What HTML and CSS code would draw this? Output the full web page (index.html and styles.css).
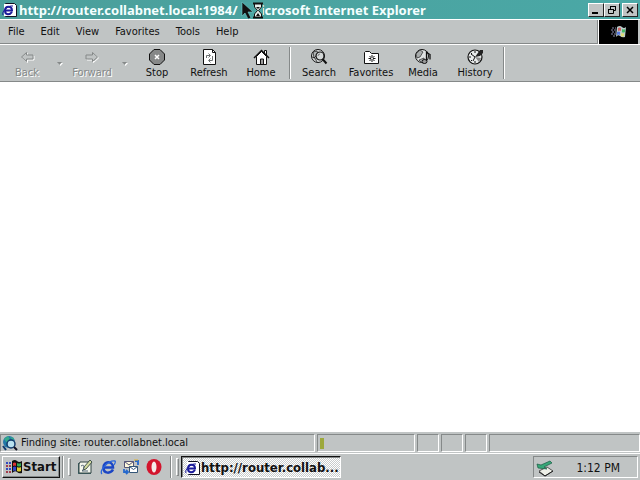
FILE: index.html
```html
<!DOCTYPE html>
<html lang="en">
<head>
<meta charset="utf-8">
<title>Microsoft Internet Explorer</title>
<link rel="stylesheet" href="styles.css">
</head>
<body>
<svg class="defs" aria-hidden="true">
  <symbol id="page-e" viewBox="0 0 16 16">
    <path d="M3.500 1.500h9l2 2v11h-11z" fill="#fff" stroke="#112"/>
    <path d="M3 2v12" stroke="#fff" stroke-width="2"/>
    <path d="M3 8.500h7c0-5-7-5-7 0s5 4.500 7 1.500" fill="none" stroke="#1c1c9c" stroke-width="2"/>
    <path d="M1 13C-1 10 6 3 11 4" fill="none" stroke="#1c1c9c"/>
  </symbol>
  <symbol id="flag" viewBox="0 0 18 16">
    <path d="M7 2q3-2 5 0t5 0v12q-3 1-5-1t-5 1z" fill="#111"/>
    <path d="M8 4q2-1 3 0v3q-1-1-3 0z" fill="#d33"/>
    <path d="M12 4q2 1 4 0v3q-2 1-4 0z" fill="#3a5"/>
    <path d="M8 8q2-1 3 0v4q-1-1-3 0z" fill="#34c"/>
    <path d="M12 8q2 1 4 0v4q-2 1-4 0z" fill="#dc3"/>
    <path d="M1 4h2M4 4h2M1 10h2M4 10h2" stroke="#334abf" stroke-width="2"/>
    <path d="M1 7h2M4 7h2M1 13h2M4 13h2" stroke="#a33c4a" stroke-width="2"/>
  </symbol>
</svg>
<div class="desktop">
  <header class="titlebar">
    <svg class="icon16"><use href="#page-e"/></svg>
    <h1>http://router.collabnet.local:1984/ - Microsoft Internet Explorer</h1>
    <div class="controls">
      <button aria-label="Minimize"><svg viewBox="0 0 12 10"><path d="M2 8h6" stroke="#000" stroke-width="2"/></svg></button>
      <button aria-label="Restore"><svg viewBox="0 0 12 10"><path d="M4.500 4V1.500h5v4H8M4 1.500h6M2.500 4.500h5v4h-5zM2 4.500h6" fill="none" stroke="#000"/></svg></button>
      <button class="close" aria-label="Close"><svg viewBox="0 0 12 10"><path d="M3 2l6 6M9 2L3 8" stroke="#000" stroke-width="1.500"/></svg></button>
    </div>
    <svg class="cursor" viewBox="0 0 24 20" aria-hidden="true">
      <path d="M0 1h22v17H0z" fill="#4ba6a3"/>
      <path d="M1 1v14l3-3 3 6 3-1-3-6h5z" fill="#111" stroke="#7cc" stroke-width=".6"/>
      <path d="M12 2.500h10M12 16.500h10" stroke="#111" stroke-width="2"/>
      <path d="M13.500 3v3l3 3.500-3 3.500v3h7v-3l-3-3.500 3-3.500V3z" fill="#e5efec" stroke="#111"/>
      <path d="M15 6h4l-2 2zM15 15l2-3 2 3z" fill="#111"/>
    </svg>
  </header>
  <div class="menurow">
    <nav class="menu">
      <button>File</button><button>Edit</button><button>View</button><button>Favorites</button><button>Tools</button><button>Help</button>
    </nav>
    <div class="throbber">
      <svg viewBox="0 0 18 14">
        <path d="M7 2q3-2 5 0t4 0l-1 10q-3 1-5-1t-4 1z" fill="#bcc"/>
        <path d="M8 3q2-1 3 0v3q-1-1-3 0z" fill="#c66"/>
        <path d="M12 4q2 1 3 0v3q-2 1-3 0z" fill="#4b6"/>
        <path d="M7 7q2-1 3 0v3q-1-1-3 0z" fill="#57d"/>
        <path d="M11 8q2 1 3 0v3q-2 1-3 0z" fill="#dd7"/>
        <path d="M2 3h4M1 5h5M2 7h4M1 9h5M3 11h3" stroke="#88a" stroke-dasharray="2 1"/>
      </svg>
    </div>
  </div>
  <div class="toolbar">
    <button class="tool" disabled>
      <svg viewBox="0 0 18 18"><path d="M8.500 4.500l-5 4.500 5 4.500V11H15V7H8.500z" fill="none" stroke="#fff" transform="translate(1 1)"/><path d="M8.500 4.500l-5 4.500 5 4.500V11H15V7H8.500z" fill="#c0c4c4" stroke="#858989"/></svg>
      <span>Back</span>
    </button>
    <button class="drop" disabled aria-label="Back history"><svg viewBox="0 0 7 5"><path d="M2 2h5L4.500 5z" fill="#fff"/><path d="M1 1h5L3.500 4z" fill="#858989"/></svg></button>
    <button class="tool" disabled>
      <svg viewBox="0 0 18 18"><path d="M9.500 4.500l5 4.500-5 4.500V11H3V7h6.500z" fill="none" stroke="#fff" transform="translate(1 1)"/><path d="M9.500 4.500l5 4.500-5 4.500V11H3V7h6.500z" fill="#c0c4c4" stroke="#858989"/></svg>
      <span>Forward</span>
    </button>
    <button class="drop" disabled aria-label="Forward history"><svg viewBox="0 0 7 5"><path d="M2 2h5L4.500 5z" fill="#fff"/><path d="M1 1h5L3.500 4z" fill="#858989"/></svg></button>
    <button class="tool">
      <svg viewBox="0 0 18 18"><path d="M6 1.500h6L16.500 6v6L12 16.500H6L1.500 12V6z" fill="#868888" stroke="#111"/><path d="M7 7l4 4M11 7l-4 4" stroke="#fff" stroke-width="1.500"/></svg>
      <span>Stop</span>
    </button>
    <button class="tool">
      <svg viewBox="0 0 18 18"><path d="M3.500 1.500h9l3 3v12h-12z" fill="#fff" stroke="#111"/><path d="M12.500 1.500v3h3" fill="none" stroke="#111"/><path d="M6.500 10V7.500H10M8.500 5.500l2 2-2 2M12.500 8v4.500H9M10.500 10.500l-2 2 2 2" fill="none" stroke="#6b7070"/></svg>
      <span>Refresh</span>
    </button>
    <button class="tool">
      <svg viewBox="0 0 18 18"><path d="M12.500 6V2.500h2V8" fill="#fff" stroke="#111"/><path d="M4.500 8.500v8h10v-8l-5-5z" fill="#fff" stroke="#111"/><path d="M2 10l7.500-7.500L17 10" fill="none" stroke="#111" stroke-width="1.500"/><path d="M8.500 16v-5h3v5" fill="#999" stroke="#111"/></svg>
      <span>Home</span>
    </button>
    <i class="sep"></i>
    <button class="tool">
      <svg viewBox="0 0 18 18"><circle cx="8" cy="8" r="6.500" fill="#dde0e0" stroke="#111"/><path d="M3 4l4-1 1 3-4 4zM2 9l3 1 2 4" fill="#b0b4b4" stroke="#111" stroke-width=".7"/><circle cx="10" cy="8" r="4" fill="#d4d8d8" stroke="#111" stroke-width="1.200"/><path d="M8 8q0-2 2-2" fill="none" stroke="#777"/><path d="M12.500 11l4 4.500" stroke="#111" stroke-width="2"/></svg>
      <span>Search</span>
    </button>
    <button class="tool">
      <svg viewBox="0 0 18 18"><path d="M2.500 15.500v-11l1-1h4l2 2h7v10z" fill="#fff" stroke="#111"/><path d="M10 7v7M6.500 10.500h7M7.500 8l5 5M12.500 8l-5 5" stroke="#111"/><circle cx="10" cy="10.500" r="1" fill="#fff"/></svg>
      <span>Favorites</span>
    </button>
    <button class="tool">
      <svg viewBox="0 0 18 18"><circle cx="8" cy="8" r="6.500" fill="#dfe2e2" stroke="#111"/><path d="M2 6l4-4 3 2-3 5-3 1zM5 12l5-2 1 4-3 1z" fill="#a8acac" stroke="#111" stroke-width=".6"/><path d="M12.500 13V3.500q1 2 3.500 3v5" fill="none" stroke="#111" stroke-width="1.300"/><ellipse cx="10.500" cy="13.500" rx="2.500" ry="2" fill="#999" stroke="#111"/></svg>
      <span>Media</span>
    </button>
    <button class="tool">
      <svg viewBox="0 0 18 18"><circle cx="9" cy="9" r="7" fill="#e7eaea" stroke="#111" stroke-width="1.200"/><path d="M9 9l5-7h3v3l-3 3z" fill="#222"/><path d="M9 9l6 1-2 4z" fill="#888"/><path d="M9 9L5 6M9 9l-2 4M9 3v2M3 9h2M9 13v2M5 5l1 1M5 13l1-1" stroke="#111"/></svg>
      <span>History</span>
    </button>
    <i class="sep"></i>
  </div>
  <main class="page"></main>
  <footer class="status">
    <div class="cell message">
      <svg class="icon16" viewBox="0 0 16 16"><circle cx="7" cy="7" r="6" fill="#2378a8"/><path d="M2 4l4-3 2 3-3 4zM8 2l4 1-1 3z" fill="#35aa8c"/><circle cx="9" cy="9" r="4" fill="#b9e2f0" stroke="#123a6c" stroke-width="1.500"/><path d="M12 12l3 3" stroke="#112" stroke-width="2"/><path d="M1 11l3 4" stroke="#123a6c" stroke-width="2"/></svg>
      <span>Finding site: router.collabnet.local</span>
    </div>
    <div class="cell progress"><i></i></div>
    <div class="cell small"></div>
    <div class="cell small"></div>
    <div class="cell small"></div>
    <div class="cell zone"></div>
  </footer>
  <footer class="taskbar">
    <button class="start"><svg viewBox="0 0 18 16"><use href="#flag"/></svg>Start</button>
    <i class="sep"></i><i class="grip"></i>
    <div class="quick">
      <button aria-label="Show Desktop"><svg viewBox="0 0 16 16"><path d="M1 4h13v11H1z" fill="#3f6468"/><path d="M3 3h11v11H2V5z" fill="#f4f7ee" stroke="#344"/><path d="M6 11l1-3 6-7 2 2-6 7z" fill="#d3dca0" stroke="#233" stroke-width=".8"/><path d="M4 7q3-2 3 1t-2 4h6" fill="none" stroke="#567"/></svg></button>
      <button aria-label="Internet Explorer"><svg viewBox="0 0 16 16"><path d="M4 8.500h9c0-7-9.500-7-9.500 0s7.500 6 9.500 2" fill="none" stroke="#1b45c4" stroke-width="2.500"/><path d="M2 15C-1 12 8 1 15 2q1 1-1 4" fill="none" stroke="#2865dd" stroke-width="1.300"/></svg></button>
      <button aria-label="Outlook Express"><svg viewBox="0 0 16 16"><path d="M1.500 2.500h9v6h-9z" fill="#fff9dc" stroke="#557"/><path d="M1.500 2.500L6 6l4.500-3.500" fill="none" stroke="#557"/><path d="M6.500 7.500h8v6h-8z" fill="#fff" stroke="#357"/><path d="M6.500 7.500l4 3 4-3" fill="none" stroke="#357"/><path d="M12 2h3v4M1 10v3h4M3 11l2 2-2 2" fill="none" stroke="#2468cd" stroke-width="1.800"/><path d="M11 1h4" stroke="#e4b52c"/></svg></button>
      <button aria-label="Opera"><svg viewBox="0 0 16 16"><ellipse cx="8" cy="8" rx="7.500" ry="8" fill="#d3142d"/><ellipse cx="8" cy="8" rx="2.500" ry="5.500" fill="#f5e9e9"/></svg></button>
    </div>
    <i class="sep"></i><i class="grip"></i>
    <button class="task"><svg class="icon16"><use href="#page-e"/></svg><span>http://router.collab...</span></button>
    <div class="tray">
      <svg viewBox="0 0 18 18"><path d="M3 12l8-4 6 4-8 5z" fill="#eef0e8" stroke="#555"/><path d="M3 13l6 4 8-5" fill="none" stroke="#222"/><path d="M1 5l4 1 9-4 2 2-8 4 3 2-9-1z" fill="#38a878" stroke="#185a43" stroke-width=".7"/></svg>
      <time>1:12 PM</time>
    </div>
  </footer>
</div>
</body>
</html>
```
FILE: styles.css
```css
* { box-sizing: border-box; }
body {
  margin: 0;
  background: #c0c4c4;
  color: #111;
  font: 11px/14px "DejaVu Sans Condensed", "DejaVu Sans", sans-serif;
}
button {
  margin: 0;
  padding: 0;
  border: 0;
  background: none;
  color: inherit;
  font: inherit;
}
svg { display: block; flex: none; }
.defs { position: absolute; width: 0; height: 0; }
.icon16 { width: 16px; height: 16px; }
.desktop { display: flex; flex-direction: column; min-height: 100vh; }

.titlebar {
  position: relative;
  display: flex;
  align-items: center;
  height: 19px;
  padding: 0 2px;
  background: linear-gradient(90deg, #4b9f9b, #4aa8a6);
  color: #f4ffff;
}
.titlebar h1 {
  flex: 1;
  min-width: 0;
  margin: 0 0 0 1px;
  overflow: hidden;
  font-family: "Noto Sans", sans-serif;
  font-size: 13px;
  line-height: 18px;
  white-space: nowrap;
}
.controls { display: flex; }
.controls button {
  width: 16px;
  height: 14px;
  padding: 1px;
  background: #c0c4c4;
  border: 1px solid;
  border-color: #fff #222 #222 #fff;
}
.controls svg { width: 12px; height: 10px; }
.controls .close { margin-left: 2px; }
.cursor { position: absolute; left: 241px; top: 1px; width: 24px; height: 20px; }

.menurow {
  display: flex;
  height: 26px;
  border-top: 1px solid #fff;
  border-bottom: 1px solid #fff;
}
.menu {
  display: flex;
  flex: 1;
  align-items: center;
  border-bottom: 1px solid #858989;
  border-right: 1px solid #858989;
}
.menu button { padding: 0 8px; }
.throbber {
  display: flex;
  align-items: center;
  justify-content: center;
  width: 40px;
  margin-right: 2px;
  border-left: 1px solid #fff;
  background: #000;
}
.throbber svg { width: 18px; height: 14px; }

.toolbar {
  display: flex;
  height: 37px;
  padding: 1px;
  border-bottom: 1px solid #858989;
}
.tool {
  display: flex;
  flex-direction: column;
  align-items: center;
  width: 52px;
  padding-top: 2px;
}
.tool svg { width: 18px; height: 18px; }
.tool:disabled { color: #858989; text-shadow: 1px 1px #fff; }
.drop { width: 13px; padding: 0 3px; }
.drop svg { width: 7px; height: 5px; }
.sep {
  width: 2px;
  margin: 1px 2px;
  border-left: 1px solid #858989;
  border-right: 1px solid #fff;
}

.page { flex: 1; background: #fff; }

.status {
  display: flex;
  gap: 2px;
  height: 22px;
  padding: 2px 0 1px;
  border-bottom: 1px solid #fff;
}
.cell {
  display: flex;
  align-items: center;
  border: 1px solid;
  border-color: #858989 #fff #fff #858989;
}
.message { width: 315px; gap: 3px; padding-left: 1px; white-space: nowrap; }
.progress { width: 98px; padding-left: 2px; }
.progress i { width: 4px; height: 11px; background: #9ca83c; }
.small { width: 22px; }
.zone { flex: 1; }

.taskbar {
  display: flex;
  height: 26px;
  padding: 2px;
}
.start {
  display: flex;
  align-items: center;
  width: 58px;
  height: 22px;
  padding-left: 2px;
  border: 1px solid;
  border-color: #fff #111 #111 #fff;
  box-shadow: inset -1px -1px #858989;
  font-size: 13px;
  font-weight: bold;
}
.start svg { width: 18px; height: 16px; }
.taskbar .sep { margin: 0 2px; }
.grip {
  width: 3px;
  margin: 2px;
  border: 1px solid;
  border-color: #fff #858989 #858989 #fff;
}
.quick { display: flex; align-items: center; gap: 7px; padding: 0 6px 0 4px; }
.quick svg { width: 16px; height: 16px; }
.task {
  display: flex;
  align-items: center;
  width: 160px;
  height: 22px;
  padding: 1px 0 0 3px;
  border: 1px solid;
  border-color: #111 #fff #fff #111;
  box-shadow: inset 1px 1px #858989;
  background: repeating-conic-gradient(#fff 0 25%, #c8cccc 0 50%) 0 0 / 2px 2px;
  font-size: 13px;
  font-weight: bold;
  white-space: nowrap;
}
.tray {
  display: flex;
  align-items: center;
  justify-content: space-between;
  width: 105px;
  height: 22px;
  margin-left: auto;
  padding: 2px 17px 0 2px;
  border: 1px solid;
  border-color: #858989 #fff #fff #858989;
  font-size: 12px;
}
.tray svg { width: 18px; height: 18px; }
```
